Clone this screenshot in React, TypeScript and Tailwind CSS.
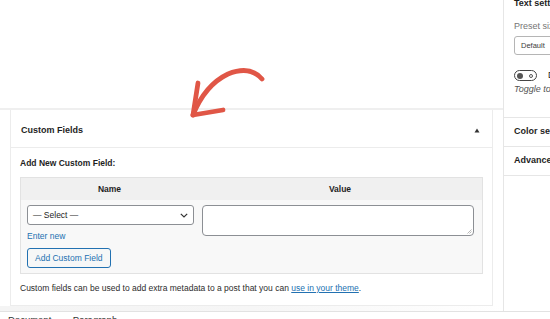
import React from 'react';

function Arrow() {
  return (
    <svg
      className="absolute left-[180px] top-[60px]"
      width="100"
      height="70"
      viewBox="0 0 100 70"
      fill="none"
    >
      <path
        d="M82 19 Q70 5 48 14 Q25 25 13 55"
        stroke="#e05646"
        strokeWidth="4.8"
        strokeLinecap="round"
        strokeLinejoin="round"
      />
      <path
        d="M18 23 L13 55 L43 50"
        stroke="#e05646"
        strokeWidth="4.8"
        strokeLinecap="round"
        strokeLinejoin="round"
      />
    </svg>
  );
}

function Sidebar() {
  return (
    <aside className="flex-1 border-l border-[#e6e6e6] overflow-hidden whitespace-nowrap text-[#1e1e1e]">
      <div className="pl-[10px] h-[118px] border-b border-[#e6e6e6] flex flex-col">
        <div className="-mt-[3px] h-[12px] leading-[12px] text-[9px] font-bold">Text settings</div>
        <div className="mt-[12px] h-[11px] leading-[11px] text-[9px] text-[#757575]">Preset size</div>
        <div className="mt-[4px] h-[19px] w-[80px] shrink-0 rounded-[3px] border border-[#b5b5b5] flex items-center pl-[6px] text-[7.5px] text-[#3c3c3c]">
          Default
        </div>
        <div className="mt-[15px] flex items-center gap-[11px] h-[11px]">
          <div className="w-[23px] h-[11px] shrink-0 rounded-full border-[1.5px] border-[#444] flex items-center justify-between pl-[2px] pr-[3px]">
            <div className="w-[6px] h-[6px] rounded-full bg-[#555]" />
            <div className="w-[4px] h-[4px] rounded-full border border-[#555]" />
          </div>
          <span className="text-[9px]">Drop cap</span>
        </div>
        <div className="mt-[3px] text-[9px] italic text-[#555] leading-[11px]">
          Toggle to show a large initial letter.
        </div>
      </div>
      <div className="pl-[10px] h-[29px] border-b border-[#e6e6e6] flex items-center text-[9px] font-bold">
        Color settings
      </div>
      <div className="pl-[10px] h-[29px] border-b border-[#e6e6e6] flex items-center text-[9px] font-bold">
        Advanced
      </div>
    </aside>
  );
}

function CustomFields() {
  return (
    <div className="mx-[10px] bg-white border-x border-b border-[#ececec] text-[#1e1e1e]">
      <div className="h-[38px] border-b border-[#ececec] flex items-center justify-between pt-[4px] pl-[10px] pr-[12px]">
        <span className="text-[9px] font-bold">Custom Fields</span>
        <svg width="6" height="5" viewBox="0 0 6 5">
          <path d="M3 0.5 L5.5 4.5 L0.5 4.5 Z" fill="#333" />
        </svg>
      </div>
      <div className="px-[9px] pt-[10px] pb-[11px]">
        <div className="h-[11px] leading-[11px] text-[8.5px] font-bold">Add New Custom Field:</div>
        <div className="mt-[8px] border border-[#e2e2e2] bg-[#f8f8f8]">
          <div className="flex h-[22px] bg-[#f0f0f0] text-[8.5px] font-bold items-center">
            <div className="w-[177px] text-center">Name</div>
            <div className="flex-1 text-center">Value</div>
          </div>
          <div className="flex pt-[5px] pb-[5px]">
            <div className="w-[177px] pl-[6px] pr-[4px]">
              <div className="h-[20px] rounded-[3px] border border-[#8c8f94] bg-white flex items-center justify-between pl-[5px] pr-[5px] text-[8.5px]">
                <span>— Select —</span>
                <svg width="8" height="5" viewBox="0 0 8 5" fill="none">
                  <path d="M0.8 0.8 L4 4 L7.2 0.8" stroke="#333" strokeWidth="1.2" />
                </svg>
              </div>
              <div className="mt-[6px] h-[11px] leading-[11px] text-[8.5px] text-[#2271b1]">Enter new</div>
              <button className="mt-[6px] h-[20px] px-[7px] rounded-[3px] border border-[#2271b1] bg-[#f6f7f7] text-[8.5px] text-[#2271b1]">
                Add Custom Field
              </button>
            </div>
            <div className="flex-1 pl-[4px] pr-[8px]">
              <div className="relative h-[31px] rounded-[4px] border border-[#8c8f94] bg-white">
                <svg className="absolute right-[1px] bottom-[1px]" width="5" height="5" viewBox="0 0 5 5">
                  <path d="M0.5 4.5 L4.5 0.5 M2.5 4.5 L4.5 2.5" stroke="#999" strokeWidth="0.7" />
                </svg>
              </div>
            </div>
          </div>
        </div>
        <p className="mt-[9px] text-[8.5px] leading-[11px] text-[#2c2c2c]">
          Custom fields can be used to add extra metadata to a post that you can{' '}
          <span className="text-[#2271b1] underline">use in your theme</span>.
        </p>
      </div>
    </div>
  );
}

export default function App() {
  return (
    <div
      className="relative w-[550px] h-[319px] overflow-hidden bg-white flex flex-col"
      style={{ fontFamily: '"Liberation Sans", Arial, sans-serif' }}
    >
      <div className="flex h-[311px] shrink-0">
        <main className="w-[503px] flex flex-col">
          <div className="h-[108px] shrink-0" />
          <div className="h-[2px] shrink-0 bg-[#efefef]" />
          <CustomFields />
          <div className="flex-1 bg-gradient-to-r from-[#f4f4f4] via-[#f6f6f6] to-white" />
        </main>
        <Sidebar />
      </div>
      <footer className="flex-1 border-t border-[#e2e2e2] pl-[8px] pt-[2px] text-[9.5px] leading-[11px] text-[#333] whitespace-nowrap flex gap-[6px]">
        <span>Document</span>
        <span>→</span>
        <span>Paragraph</span>
      </footer>
      <Arrow />
    </div>
  );
}
